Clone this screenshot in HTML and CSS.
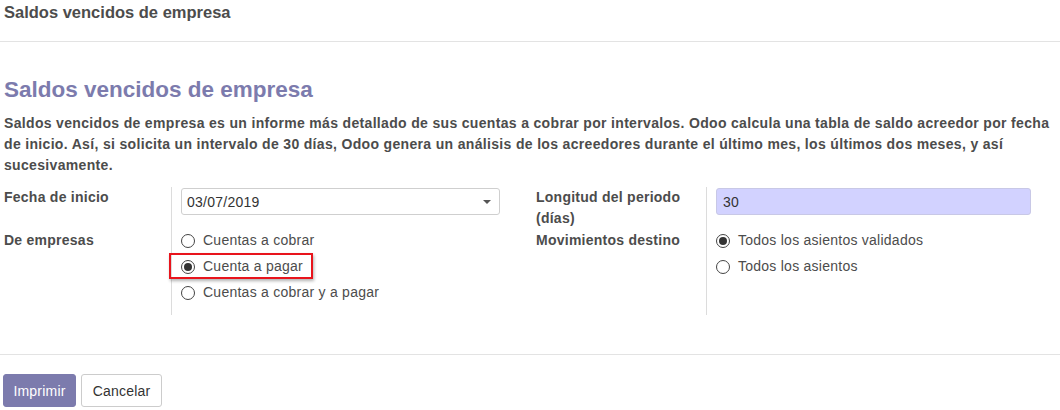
FILE: index.html
```html
<!DOCTYPE html>
<html lang="es">
<head>
<meta charset="utf-8">
<title>Saldos vencidos de empresa</title>
<link rel="stylesheet" href="styles.css">
</head>
<body>
<div class="modal">
  <header class="modal-header">
    <h4 class="modal-title">Saldos vencidos de empresa</h4>
  </header>
  <main class="modal-body">
    <h2 class="report-title">Saldos vencidos de empresa</h2>
    <p class="report-desc">Saldos vencidos de empresa es un informe más detallado de sus cuentas a cobrar por intervalos. Odoo calcula una tabla de saldo acreedor por fecha de inicio. Así, si solicita un intervalo de 30 días, Odoo genera un análisis de los acreedores durante el último mes, los últimos dos meses, y así sucesivamente.</p>
    <div class="groups">
      <div class="group group-left">
        <div class="label row1">Fecha de inicio</div>
        <div class="field row1">
          <div class="select">
            <span>03/07/2019</span>
            <span class="caret"></span>
          </div>
        </div>
        <div class="label row2">De empresas</div>
        <div class="field row2">
          <div class="radio"><span class="dot"></span>Cuentas a cobrar</div>
          <div class="radio checked highlight"><span class="dot"></span>Cuenta a pagar</div>
          <div class="radio"><span class="dot"></span>Cuentas a cobrar y a pagar</div>
        </div>
      </div>
      <div class="group group-right">
        <div class="label row1">Longitud del periodo (días)</div>
        <div class="field row1">
          <div class="input-int">30</div>
        </div>
        <div class="label row2">Movimientos destino</div>
        <div class="field row2">
          <div class="radio checked"><span class="dot"></span>Todos los asientos validados</div>
          <div class="radio"><span class="dot"></span>Todos los asientos</div>
        </div>
      </div>
    </div>
  </main>
  <footer class="modal-footer">
    <button class="btn btn-primary">Imprimir</button>
    <button class="btn btn-secondary">Cancelar</button>
  </footer>
</div>
</body>
</html>
```
FILE: styles.css
```css
* { box-sizing: border-box; }
html, body { margin: 0; padding: 0; background: #fff; }
body {
  font-family: "Liberation Sans", Arial, sans-serif;
  font-size: 14px;
  letter-spacing: 0.25px;
  color: #4c4c4c;
  width: 1060px;
  height: 410px;
  overflow: hidden;
}
.modal-header {
  height: 42px;
  border-bottom: 1px solid #e3e3e3;
  padding: 0 4px;
}
.modal-title {
  margin: 0;
  font-size: 16.5px;
  font-weight: bold;
  line-height: 24px;
  letter-spacing: 0;
  color: #4c4c4c;
}
.modal-body {
  padding: 0 4px;
}
.report-title {
  margin: 34px 0 0;
  font-size: 22.5px;
  line-height: 27px;
  font-weight: bold;
  letter-spacing: 0;
  color: #7c7bad;
}
.report-desc {
  margin: 10px 0 0;
  font-weight: bold;
  line-height: 21px;
  letter-spacing: 0.33px;
  width: 1054px;
}
.groups {
  display: flex;
  margin-top: 11px;
}
.group {
  display: grid;
  grid-template-rows: 43px auto;
}
.group-left {
  width: 532px;
  grid-template-columns: 167px 365px;
}
.group-right {
  width: 520px;
  grid-template-columns: 170px 350px;
}
.label {
  font-weight: bold;
  line-height: 21px;
}
.group-right .label { padding-right: 8px; }
.field {
  border-left: 1px solid #dcdcdc;
  padding-left: 9px;
}
.field.row2 { padding-bottom: 7px; }
.group-left .field { padding-right: 36px; }
.group-right .field { padding-right: 25px; }
.select {
  margin-top: 1px;
  height: 27px;
  border: 1px solid #cfcfcf;
  border-radius: 3px;
  display: flex;
  align-items: center;
  justify-content: space-between;
  padding: 0 8px 0 5px;
  color: #333;
}
.caret {
  width: 0;
  height: 0;
  border-left: 4px solid transparent;
  border-right: 4px solid transparent;
  border-top: 4px solid #555;
}
.input-int {
  margin-top: 1px;
  height: 27px;
  border: 1px solid #c8c8e6;
  border-radius: 3px;
  background: #d2d2ff;
  display: flex;
  align-items: center;
  padding: 0 6px;
  color: #333;
}
.radio {
  position: relative;
  display: flex;
  align-items: center;
  height: 21px;
  margin-bottom: 5px;
  line-height: 21px;
  width: max-content;
}
.radio .dot {
  width: 14px;
  height: 14px;
  border: 1px solid #444;
  border-radius: 50%;
  margin-right: 8px;
  background: #fff;
  flex: none;
  position: relative;
}
.radio.checked .dot::after {
  content: "";
  position: absolute;
  left: 2px;
  top: 2px;
  width: 8px;
  height: 8px;
  border-radius: 50%;
  background: #333;
}
.radio.highlight::after {
  content: "";
  position: absolute;
  left: -12px;
  right: -10px;
  top: -3px;
  bottom: -2px;
  border: 2px solid #e8141c;
  box-shadow: 1px 2px 3px rgba(0, 0, 0, 0.3);
}
.modal-footer {
  margin-top: 39px;
  border-top: 1px solid #e3e3e3;
  padding: 19px 3px 0;
  display: flex;
  gap: 5px;
}
.btn {
  height: 33px;
  font-family: "Liberation Sans", Arial, sans-serif;
  font-size: 14px;
  letter-spacing: 0.2px;
  border-radius: 3px;
  padding: 0;
  cursor: pointer;
}
.btn-primary {
  width: 73px;
  background: #7c7bad;
  border: 1px solid #7c7bad;
  color: #fff;
}
.btn-secondary {
  width: 81px;
  background: #fff;
  border: 1px solid #cccccc;
  color: #333;
}
```
